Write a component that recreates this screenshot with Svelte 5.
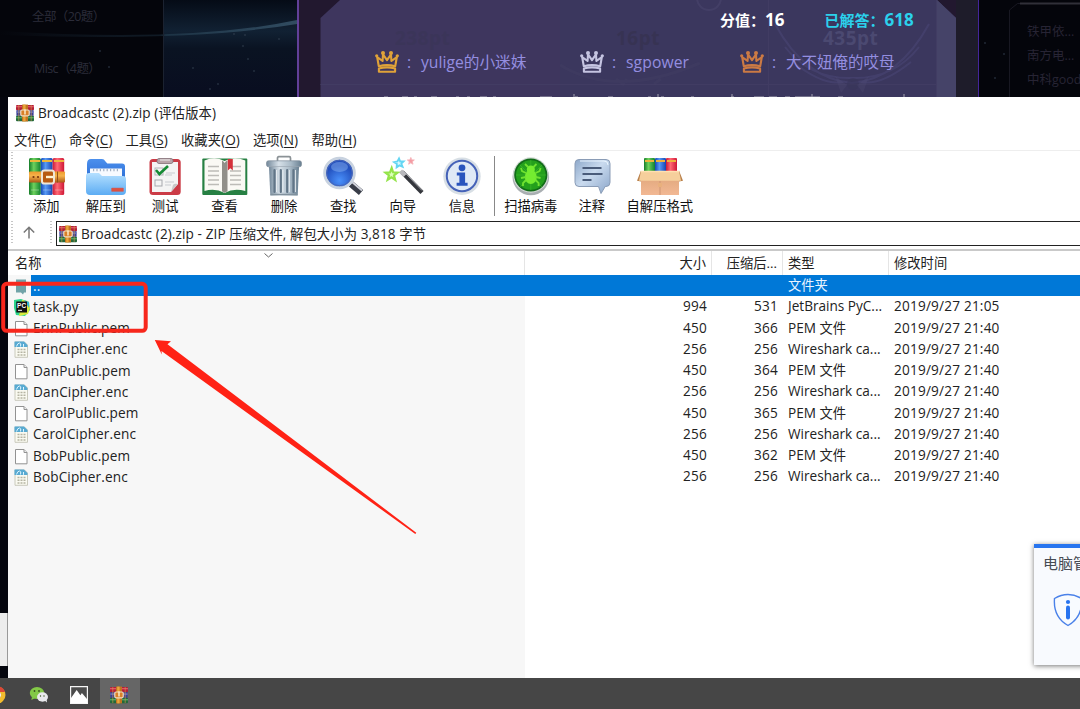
<script>
  const menus = [
    ['文件', 'F', 55], ['命令', 'C', 56.5], ['工具', 'S', 55.5],
    ['收藏夹', 'O', 72], ['选项', 'N', 58.5], ['帮助', 'H', 60]
  ];
  const tools = [
    ['books', '添加', 59.4], ['folder', '解压到', 59.4], ['test', '测试', 59.4],
    ['view', '查看', 59.4], ['trash', '删除', 59.4], ['find', '查找', 59.4],
    ['wand', '向导', 59.4], ['info', '信息', 59.4], ['sep', '', 7],
    ['virus', '扫描病毒', 62], ['note', '注释', 60], ['sfx', '自解压格式', 76]
  ];
  const pem = (name, packed) => ({ icon: 'doc', name, size: '450', packed, type: 'PEM ', zh: '文件', date: '2019/9/27 21:40' });
  const enc = (name) => ({ icon: 'enc', name, size: '256', packed: '256', type: 'Wireshark ca...', zh: '', date: '2019/9/27 21:40' });
  const files = [
    { icon: 'up', name: '..', size: '', packed: '', type: '', zh: '文件夹', date: '', sel: true },
    { icon: 'py', name: 'task.py', size: '994', packed: '531', type: 'JetBrains PyC...', zh: '', date: '2019/9/27 21:05' },
    pem('ErinPublic.pem', '366'), enc('ErinCipher.enc'),
    pem('DanPublic.pem', '364'), enc('DanCipher.enc'),
    pem('CarolPublic.pem', '365'), enc('CarolCipher.enc'),
    pem('BobPublic.pem', '362'), enc('BobCipher.enc')
  ];
  const stars = [[234, 34], [245, 35], [243, 46], [279, 39], [248, 59], [254, 71], [193, 68], [218, 84], [210, 89], [109, 67], [985, 43], [1004, 54], [995, 78], [100, 51]];
</script>

{#snippet rar(size)}
  <svg class="rar" width={size} height={size} viewBox="0 0 18 18">
    <rect x="0" y="1" width="18" height="5.2" rx="1" fill="#b32038" />
    <rect x="0" y="2" width="18" height="1.3" fill="#dd5566" />
    <rect x="0.4" y="6.2" width="17.2" height="5.6" fill="#3c3f94" />
    <rect x="0.4" y="7.4" width="17.2" height="1.4" fill="#7078c4" />
    <rect x="0" y="11.8" width="18" height="5.4" rx="1" fill="#23683a" />
    <rect x="0" y="13" width="18" height="1.4" fill="#51a362" />
    <path d="M2.8 1v16M15.2 1v16" stroke="#d6a04a" stroke-width=".8" opacity=".75" />
    <rect x="6" y="0.6" width="6" height="16.8" fill="#c27320" />
    <rect x="7.2" y="0.6" width="2.4" height="16.8" fill="#eaa63b" />
    <rect x="4.8" y="6" width="8.4" height="5.8" rx="1.2" fill="#d98028" stroke="#f0dcc0" stroke-width="1.2" />
    <path d="M9 5.600v4.800" stroke="#fff1d0" stroke-width="1.4" />
  </svg>
{/snippet}

{#snippet crown(color)}
  <svg class="crown" width="24" height="22" viewBox="0 0 24 22" fill="none" stroke={color} stroke-width="2.1" stroke-linejoin="round">
    <path d="M3.8 15.2 2.2 6.2 7.6 10 8 3.3 12 9.2 16 3.3 16.4 10 21.8 6.2 20.2 15.2Q12 13 3.8 15.2Z" />
    <path d="M3.9 17.4Q12 15.4 20.1 17.4V20.7H3.9Z" />
    <g fill={color} stroke="none"><circle cx="1.7" cy="4.8" r="1.6" /><circle cx="8" cy="2.1" r="2" /><circle cx="16" cy="2.1" r="2" /><circle cx="22.3" cy="4.8" r="1.6" /></g>
  </svg>
{/snippet}

{#snippet toolIcon(kind)}
  <svg class="tool-icon" width="40" height="40" viewBox="0 0 40 40">
    {#if kind === 'books'}
      <rect x="3" y="2" width="11.8" height="37" rx="1.5" fill="url(#green)" />
      <rect x="14.8" y="2" width="11.8" height="37" rx="1.5" fill="url(#blue)" />
      <rect x="26.6" y="2" width="11.6" height="37" rx="1.5" fill="url(#red)" />
      <path d="M4 5h10M16 5h10M28 5h10" stroke="#edb73a" stroke-width="2.2" />
      <path d="M5 34h8M17 34h8M29 34h8" stroke="#fff" stroke-width=".8" opacity=".4" />
      <rect x="3" y="15.5" width="36" height="11" rx="1" fill="url(#belt)" />
      <circle cx="7.500" cy="21" r="1.1" fill="#78350d" /><circle cx="12" cy="21" r="1.1" fill="#78350d" />
      <rect x="16" y="14.600" width="12" height="13" rx="2.4" fill="#b85c12" stroke="#eee6d6" stroke-width="2" />
      <path d="M20 21h7" stroke="#fff3d0" stroke-width="2.4" /><path d="M31.5 15.5v11" stroke="#91501a" />
    {:else if kind === 'folder'}
      <path d="M1 8q0-5 4-5h11q2 0 3.5 2.4l1.8 2H36q3 0 3 3V26H1Z" fill="url(#folderBack)" />
      <rect x="4" y="12.5" width="32" height="14" fill="#f7faff" />
      <path d="M7 14h26" stroke="#a3b1c4" stroke-width="2.4" stroke-dasharray="1.2 2.2" />
      <path d="M0 20q0-3 3-3h10l3 3h21q3 0 3 3v12q0 4-4 4H4q-4 0-4-4Z" fill="url(#folderFront)" />
      <rect x="25.5" y="32" width="12" height="3.500" rx=".6" fill="#dd5142" stroke="#b76a77" stroke-width=".5" />
    {:else if kind === 'test'}
      <rect x="4.5" y="3" width="31.2" height="36" rx="3.5" fill="#cb3b46" />
      <path d="M7 6h26v22l-7 8H7Z" fill="#f4f4f4" /><path d="M33 28q-4-1-5 1l-2 7Z" fill="#c9c9c9" />
      <rect x="12" y="2.500" width="16" height="5" rx="2" fill="#b9a5aa" stroke="#826f76" stroke-width=".8" />
      <path d="M15 4h10" stroke="#eee" />
      <rect x="10" y="12" width="8" height="7" fill="none" stroke="#b2b4b8" /><rect x="10" y="24" width="7" height="6" fill="none" stroke="#a6a8ad" />
      <path d="m11 14 3.4 4L23 10" fill="none" stroke="#168b35" stroke-width="2.6" />
      <path d="M21 17h9M20 19h7M20 26h9M20 29h6" stroke="#c8cbd0" />
    {:else if kind === 'view'}
      <rect x="-2.7" y="2.5" width="45" height="36.5" rx="1" fill="#278043" />
      <path d="M-.5 4.5Q10-.2 19.6 5 29-.2 40.3 4.5V35Q29 31.5 19.6 37 10 31.5-.5 35Z" fill="#faf9f4" />
      <path d="M17 4.5q2 1 2.7 2.5Q20.5 5 22.5 4.5v31q-2 0-2.8 1.5-1-1.5-2.7-1.5Z" fill="#918f89" />
      <path d="M3 10.5h11M3 15h11M3 19.5h11M3 24h11M3 28.5h11M25 10.5h11M25 15h11M25 19.5h11M25 24h11M25 28.5h11" stroke="#bdbcb7" stroke-width="1.3" />
      <path d="M22.8 3h5v11.500l-2.5-2.3-2.5 2.3Z" fill="#d4313a" />
    {:else if kind === 'trash'}
      <path d="M13.5 5V2q0-1.3 1.3-1.3h10.4q1.3 0 1.3 1.3v3" fill="none" stroke="#8b9296" stroke-width="1.700" />
      <rect x="2.5" y="4.8" width="35" height="6" rx="2" fill="url(#metal)" stroke="#7e8d9a" stroke-width=".7" />
      <path d="M5 11h30l-1.3 28.5H6.3Z" fill="url(#metal)" />
      <path d="M10.5 14v22M16.8 14v22M23.2 14v22M29.5 14v22" stroke="#617587" stroke-width="2.2" stroke-linecap="round" />
      <path d="M12.6 14v22M18.9 14v22M25.3 14v22M31.4 14v22" stroke="#edf2f5" stroke-width=".9" />
      <path d="M6.5 38.5h27" stroke="#81919d" stroke-width="1.5" />
    {:else if kind === 'find'}
      <path d="m28 28 10 8.500" stroke="#393d48" stroke-width="6.5" /><path d="m29 26 10 8.500" stroke="#d2d4dc" stroke-width="1.8" />
      <circle cx="16.5" cy="17" r="14.8" fill="url(#lens)" stroke="#c8d2df" stroke-width="3" /><circle cx="16.5" cy="17" r="12.7" fill="none" stroke="#4966b6" />
      <ellipse cx="16.5" cy="11" rx="8.5" ry="5" fill="#acd2ff" opacity=".35" />
    {:else if kind === 'wand'}
      <path d="m19 16 20 20.500" stroke="#34363c" stroke-width="4.400" /><path d="m20 14.800 19 19.700" stroke="#9b9da2" /><path d="m17.5 15 4.500 4.500" stroke="#b9b9bd" stroke-width="4.400" />
      <path d="m16 2.400 1.200 3.100 3.400-.1-2.300 2.300 1.300 3.100-3.200-1.400-2.800 2 .3-3.400-2.800-1.800 3.300-.8Z" fill="#d7f8ff" stroke="#64d6f3" stroke-width="1.8" />
      <path d="m27.800 1.500.9 2.400 2.600.1-2 1.700.7 2.500-2.200-1.400-2.100 1.400.7-2.500-2-1.700 2.500-.1Z" fill="#f49aa2" stroke="#f6b4b9" />
      <path d="m8.700 12 1.400 4.300 4.500.4-3.600 2.800 1.200 4.300-3.700-2.500-3.800 2.400 1.300-4.300-3.500-2.800 4.500-.2Z" fill="#dcffba" stroke="#94e44a" stroke-width="2.200" />
    {:else if kind === 'info'}
      <circle cx="20" cy="20.3" r="18.7" fill="#d8dfe5" /><circle cx="20" cy="20" r="15.2" fill="#dfe9f6" stroke="#4562b8" stroke-width="2" />
      <circle cx="20" cy="11.8" r="3.4" fill="#2954bd" /><path d="M14.800 16.5h8.300v10.3h2.5v2.900H14.600v-2.900h2.800v-7.200h-2.600Z" fill="#2954bd" />
    {:else if kind === 'virus'}
      <circle cx="19.8" cy="21" r="18.3" fill="#a9afb2" /><circle cx="19.8" cy="19" r="17.7" fill="#d2dad4" /><circle cx="19.8" cy="19" r="16.6" fill="#126b19" /><circle cx="19.8" cy="19" r="14.8" fill="#24a01c" />
      <path d="M19.8 4v30M5 19h30M9 9l22 22M31 9 9 31" stroke="#41b930" stroke-width=".6" />
      <ellipse cx="19.8" cy="21" rx="6" ry="7" fill="#74ec30" /><circle cx="19.8" cy="13.400" r="4" fill="#74ec30" />
      <path d="m15 17-4-2-1-3m5 9-5 1m5 2-3 3v3m12.6-13 4-2 1-3m-5 9 5 1m-5 2 3 3v3M17 11l-3-3m8.500 3 3-3" fill="none" stroke="#70e230" stroke-width="1.8" />
    {:else if kind === 'note'}
      <path d="M7 3.500h27q4 0 4 4v19q0 4-4 4l-.8 0-4.200 7-2.500-7H7q-4 0-4-4V7.500q0-4 4-4Z" fill="url(#note)" stroke="#8a9cb6" />
      <path d="M8 5h24q4 0 4 4" fill="none" stroke="#eaf5ff" /><path d="M10.500 12h19M10.500 18h20M10.500 24h9" stroke="#4a5c7a" stroke-width="2" />
    {:else if kind === 'sfx'}
      <rect x="4" y="2" width="11" height="18" rx="1" fill="url(#green)" /><rect x="15" y="2" width="11" height="18" rx="1" fill="url(#blue)" /><rect x="26" y="2" width="11" height="18" rx="1" fill="url(#red)" />
      <path d="M5 5h9M16 5h9M27 5h9" stroke="#edb33b" stroke-width="2" />
      <path d="M1 16h38v23H1Z" fill="url(#box)" /><path d="m1 14.500-4 10.300 4 .8Zm38 0 4 10.300-4 .8Z" fill="#b9814c" />
      <path d="M1 15h38l2 9.800H-1Z" fill="#f6cf9c" /><path d="M1 15.500h38" stroke="#ffe0b0" stroke-width="1.400" /><path d="M20 25v14" stroke="#cf9572" /><path d="M18 27h4v4h-4Z" fill="#e9b07d" />
    {/if}
  </svg>
{/snippet}

{#snippet fileIcon(kind)}
  <svg class="file-icon" width="18" height="20" viewBox="0 0 18 20">
    {#if kind === 'up'}
      <path d="M3 3.500h10v13h-2l-1 2-2-2H3Z" fill="#71a3a8" /><path d="M3 8h10" stroke="#6293a0" />
    {:else if kind === 'py'}
      <path d="m1 3 7-1 8 3 1 8-5 6-9-1-2-7Z" fill="#29d68b" /><path d="m9 3 6 1 2 7-2 6-9 2Z" fill="#d9eb3d" /><path d="m11 3 5 2v6Z" fill="#31b5d5" />
      <rect x="3.300" y="4.500" width="10.700" height="11" fill="#111" /><text x="4.100" y="10.800" class="pc">PC</text><path d="M5 13.300h4" stroke="#fff" />
    {:else if kind === 'doc'}
      <path d="M2.500 3.500h8.500l3 3v11.300H2.500Z" fill="#fff" stroke="#929292" /><path d="M11 3.500v3h3" fill="#eee" stroke="#929292" />
    {:else}
      <path d="M2 3h9.500l3 3v12.300H2Z" fill="#fafaf1" stroke="#c4c4b5" stroke-width=".9" /><path d="M1.500 2.500h9.500l3.500 3.500v2H1.500Z" fill="#58aad2" /><path d="M3.500 7.500q1-3.500 3-3.500t1 3.500m3 .3V5" fill="none" stroke="#dff5ff" />
      <path d="M4.500 10.500h8M4.500 13.200h8M4.500 16h8" stroke="#b5b4a3" stroke-width="1.600" stroke-dasharray="2 1" />
    {/if}
  </svg>
{/snippet}

<svg width="0" height="0" class="defs">
  <defs>
    <linearGradient id="green"><stop stop-color="#157c29" /><stop offset=".4" stop-color="#6ed25d" /><stop offset="1" stop-color="#128030" /></linearGradient>
    <linearGradient id="blue"><stop stop-color="#1548b5" /><stop offset=".4" stop-color="#579af4" /><stop offset="1" stop-color="#1644b0" /></linearGradient>
    <linearGradient id="red"><stop stop-color="#c81a38" /><stop offset=".4" stop-color="#ff6874" /><stop offset="1" stop-color="#ce1735" /></linearGradient>
    <linearGradient id="belt" x2="0" y2="1"><stop stop-color="#ed9b2d" /><stop offset=".4" stop-color="#f6b34c" /><stop offset="1" stop-color="#aa5715" /></linearGradient>
    <linearGradient id="folderBack" x2="0" y2="1"><stop stop-color="#4c90ed" /><stop offset="1" stop-color="#2869d2" /></linearGradient>
    <linearGradient id="folderFront" x2="0" y2="1"><stop stop-color="#b5e0ff" /><stop offset="1" stop-color="#5cacf3" /></linearGradient>
    <linearGradient id="metal"><stop stop-color="#73889a" /><stop offset=".35" stop-color="#d6e0e8" /><stop offset=".7" stop-color="#a9bac7" /><stop offset="1" stop-color="#687f91" /></linearGradient>
    <radialGradient id="lens" cy=".75"><stop stop-color="#4a91fb" /><stop offset="1" stop-color="#2351bf" /></radialGradient>
    <linearGradient id="note" x2="1" y2="1"><stop stop-color="#8da8ca" /><stop offset=".45" stop-color="#c9daee" /><stop offset="1" stop-color="#8ba6ca" /></linearGradient>
    <linearGradient id="box" x2="0" y2="1"><stop stop-color="#dda477" /><stop offset="1" stop-color="#f2b894" /></linearGradient>
  </defs>
</svg>

<div class="desktop">
  <div class="scene">
    <svg class="sky" width="1080" height="97" viewBox="0 0 1080 97">
      <defs>
        <linearGradient id="space" x2="0" y2="1"><stop stop-color="#050b16" /><stop offset=".32" stop-color="#112133" /><stop offset=".5" stop-color="#0a1322" /><stop offset="1" stop-color="#090d20" /></linearGradient>
        <linearGradient id="beam"><stop stop-color="#182634" stop-opacity="0" /><stop offset=".54" stop-color="#13202c" /><stop offset=".56" stop-color="#20384a" /><stop offset="1" stop-color="#3a586e" /></linearGradient>
      </defs>
      <rect width="1080" height="97" fill="#04050b" />
      <rect x="163" width="134" height="97" fill="url(#space)" />
      <path d="M0 31Q190 43 297 20v4Q190 42 0 35Z" fill="url(#beam)" opacity=".8" />
      <path d="M163.500 0v97" stroke="#1b2230" />
      <rect x="297" width="682" height="97" fill="#22182f" /><rect x="956" width="22" height="97" fill="#1e1c2a" />
      <path d="M298 0v97" stroke="#624099" stroke-width="2" /><path d="M978.500 0v97" stroke="#44259a" />
      <path d="M320.500 18 340 0H937L956 18V97H320.500Z" fill="#3e365e" />
      <path d="M560 0H937L956 18V97H560Z" fill="#3b385f" opacity=".6" />
      <path d="M937 0 956 18V97H937Z" fill="#454368" /><path d="M768.500 0v97M936.500 0v97M320 84.500H937" stroke="#474269" opacity=".5" />
      <path d="M775 24q30 55 77 59 47-4 77-59M785 47q25 32 67 31 42 1 67-31M793 62q30 24 50 20m68-20q-30 24-50 20" fill="none" stroke="#4a4777" stroke-width="2" opacity=".55" />
      <circle cx="853" cy="84" r="6" fill="#38355a" opacity=".6" /><path d="m835 76 12 9-6 8m28-17-12 9 6 8" fill="#555078" opacity=".25" />
      <circle cx="709" cy="-2" r="12" fill="none" stroke="#4a456c" stroke-width="2" opacity=".6" />
      <path d="M560 65q56 34 140-2m-84 16 7 5 4-5m27 5 7-5" fill="none" stroke="#464167" stroke-width="3" opacity=".3" />
      <path d="M1009.500 97V10l8-6.500H1080" fill="none" stroke="#181822" /><path d="M1020 3.500h60" stroke="#303039" stroke-width="2" />
      {#each stars as [x, y]}<circle cx={x} cy={y} r=".8" fill="#364353" />{/each}
      <path d="M384 96.500h4m14 0h6m6 0h3m14 0h6m19 0h3m8 0h3m10 0h7m6 0h3m44 0h12m23 0h3m30 0h5m35 0h3m10 0h3m27 0h3m37 0h3m20 0h10m5 0h8m8 0h5m5 0h25m18 0h5" stroke="#9b98a9" opacity=".6" />
      <path d="M574 94v3m84-3v3m74-3v3m80-3v3m92-3v3" stroke="#9b98a9" stroke-width="2" opacity=".55" />
    </svg>
    <div class="categories"><span>全部（20题）</span><span>Misc（4题）</span></div>
    <div class="card">
      <div class="ghost"><span>238pt</span><span>16pt</span><span>435pt</span></div>
      <div class="stats"><b>分值：<i>16</i></b><b class="solved">已解答：<i>618</i></b></div>
      <div class="winners">
        <div class="winner first">{@render crown('#dfa239')}<span class="colon">:</span><span>yulige的小迷妹</span></div>
        <div class="winner second">{@render crown('#c5c4e1')}<span class="colon">:</span><span>sgpower</span></div>
        <div class="winner third">{@render crown('#cb7a44')}<span class="colon">:</span><span>大不妞俺的哎母</span></div>
      </div>
    </div>
    <div class="ranking"><span>铁甲依...</span><span>南方电...</span><span>中科good</span></div>
  </div>
  <div class="edge"></div>

  <section class="window">
    <header class="title">{@render rar(18)}<span class="title-text">Broadcastc (2).zip (<em>评估版本</em>)</span></header>
    <nav class="menu">{#each menus as [zh, key, w]}<span style:width="{w}px"><em>{zh}</em>(<u>{key}</u>)</span>{/each}</nav>
    <div class="toolbar">
      {#each tools as [kind, label, w]}
        {#if kind === 'sep'}<i class="divider"></i>{:else}
          <div class="tool" style:width="{w}px">{@render toolIcon(kind)}<span>{label}</span></div>
        {/if}
      {/each}
    </div>
    <div class="address">
      <div class="go-up"><svg width="14" height="14" viewBox="0 0 14 14"><path d="M7 12.500V1.500M1.800 6.500 7 1.300l5.200 5.200" fill="none" stroke="#777" stroke-width="1.500" /></svg></div>
      <div class="path">{@render rar(18)}<span class="path-text">Broadcastc (2).zip - ZIP <em>压缩文件</em>, <em>解包大小为</em> 3,818 <em>字节</em></span></div>
    </div>
    <div class="row head">
      <span class="name">名称<svg width="9" height="5" viewBox="0 0 9 5"><path d="m.5.5 4 3.500 4-3.500" fill="none" stroke="#666" /></svg></span>
      <span class="num">大小</span><span class="num packed">压缩后...</span><span class="type">类型</span><span class="date">修改时间</span>
    </div>
    <div class="list">
      {#each files as f}
        <div class="row" class:sel={f.sel}>
          <span class="name">{@render fileIcon(f.icon)}<span class="label">{f.name}</span></span>
          <span class="num">{f.size}</span><span class="num packed">{f.packed}</span>
          <span class="type">{f.type}<em>{f.zh}</em></span><span class="date">{f.date}</span>
        </div>
      {/each}
    </div>
  </section>

  <aside class="popup">
    <strong>电脑管</strong>
    <svg width="30" height="34" viewBox="0 0 30 34"><path d="M15 1.500Q8 1.500 1.500 5.500 0 24 15 32.500 30 24 28.500 5.500 22 1.500 15 1.500Z" fill="#f8fbff" stroke="#4a81e9" stroke-width="1.400" /><circle cx="15" cy="9" r="2.100" fill="#2874ef" /><path d="M15 14.500v10" stroke="#2874ef" stroke-width="4" stroke-linecap="round" /></svg>
  </aside>

  <footer class="taskbar">
    <div class="task chrome"><svg width="20" height="20" viewBox="0 0 20 20"><circle cx="10" cy="10" r="8.500" fill="#f2bb2e" /><path d="M2 7a8.500 8.500 0 0 1 16 0Z" fill="#db4737" /><path d="m2 7 7 11A8.500 8.500 0 0 1 2 7" fill="#3ba552" /><circle cx="10" cy="10" r="3.500" fill="#4a8af4" stroke="#fff" /></svg></div>
    <div class="task"><svg width="20" height="18" viewBox="0 0 20 18"><ellipse cx="8" cy="7" rx="7.200" ry="6" fill="#83c947" /><path d="m3 11-.7 3 4-2Z" fill="#83c947" /><ellipse cx="13.500" cy="11" rx="5.500" ry="4.700" fill="#e9e9ed" /><path d="m15 14 3 2.500-.5-4Z" fill="#e9e9ed" /><g fill="#385020"><circle cx="5.500" cy="5" r=".9" /><circle cx="10" cy="5" r=".9" /><circle cx="11.500" cy="10" r=".7" /><circle cx="15" cy="10" r=".7" /></g></svg></div>
    <div class="task"><svg width="18" height="18" viewBox="0 0 18 18"><path d="M.6.600h16.800v16.800H.6Z" fill="#4c4c4c" stroke="#f5f5f5" stroke-width="1.200" /><path d="M1 16v-4l5.700-8 3.700 5.300 1.500-2.300L17 13v4H1Z" fill="#fff" /></svg></div>
    <div class="task active">{@render rar(18)}</div>
  </footer>

  <svg class="marks" width="1080" height="709" viewBox="0 0 1080 709">
    <rect x="3.200" y="283.800" width="142.500" height="47" rx="3.500" fill="none" stroke="#f7271c" stroke-width="4" />
    <path d="M154.800 340 171 341.300 167.500 344.200 416.300 532.800 415.300 534 161.500 351 161.800 354.500Z" fill="#ff2215" />
  </svg>
</div>

<style>
  :global(body) { margin: 0; overflow: hidden; }
  .desktop { position: relative; width: 1080px; height: 709px; overflow: hidden; background: #05060e; color: #222; font: 13.600px "Open Sans", "Noto Sans", "Noto Sans CJK SC", sans-serif; }
  svg { display: block; flex: none; overflow: visible; }
  em, i { font-style: normal; }
  .defs { position: absolute; }
  .scene { position: relative; display: flex; height: 97px; overflow: hidden; }
  .sky { position: absolute; inset: 0; }
  .categories { position: relative; width: 320px; flex: none; display: flex; flex-direction: column; gap: 34px; padding: 8px 0 0 32px; box-sizing: border-box; color: #2b2c39; font-size: 12.500px; line-height: 18px; letter-spacing: -0.600px; }
  .categories span + span { padding-left: 2px; }
  .card { position: relative; width: 636px; flex: none; }
  .stats { display: flex; padding: 9px 0 0 400px; gap: 40px; font-size: 15px; line-height: 22px; color: #fff; white-space: nowrap; }
  .stats b { font-weight: 700; }
  .stats i { font-size: 17px; }
  .solved { color: #2bd1ec; }
  .winners { display: grid; grid-template-columns: 205px 160px 1fr; padding: 18px 0 0 55px; font-size: 15.700px; line-height: 26px; color: #948ee0; white-space: nowrap; }
  .winner { display: flex; align-items: center; }
  .second { letter-spacing: 0.100px; }
  .third { font-size: 15.500px; }
  .colon { width: 14px; margin-left: 8px; }
  .ghost { position: absolute; inset: 26px 0 auto 75px; display: grid; grid-template-columns: 221px 207px 1fr; color: #373353; font-size: 19px; line-height: 24px; font-weight: 700; letter-spacing: 0.500px; }
  .ghost span:first-child { color: #3b3559; }
  .ghost span:last-child { color: #4b4971; }
  .ranking { position: relative; padding: 20px 0 0 71px; display: flex; flex-direction: column; line-height: 24px; color: #272434; font-size: 12.500px; white-space: nowrap; }
  .edge { position: absolute; left: 0; top: 613px; width: 8px; height: 53px; background: #ededed; box-shadow: inset -1px 0 #999; }
  .window { position: absolute; left: 8px; top: 97px; width: 1072px; height: 581px; display: flex; flex-direction: column; background: #fff; }
  .title { display: flex; align-items: center; height: 31px; gap: 4px; padding-left: 8px; letter-spacing: 0.080px; }
  .menu { height: 23px; box-sizing: border-box; display: flex; align-items: center; padding: 1px 0 0 6px; border-bottom: 1px solid #eee; white-space: nowrap; letter-spacing: 0.060px; }
  em { font-size: 13.300px; }
  .menu u { text-underline-offset: 2px; }
  .toolbar { height: 67px; box-sizing: border-box; display: flex; padding: 5px 0 0 8.700px; background: repeating-linear-gradient(#c6c6c6 0 1px, transparent 1px 3px) 3px 1px / 2px 63px no-repeat; }
  .tool { display: flex; flex-direction: column; align-items: center; flex: none; font-size: 13.300px; line-height: 20px; color: #111; white-space: nowrap; }
  .divider { width: 1px; height: 60px; margin: 0 5px 0 2px; background: #888; }
  .address { display: flex; height: 33px; box-sizing: border-box; padding: 3px 0; border-bottom: 2px solid #c9c9c9; }
  .go-up { width: 48px; box-sizing: border-box; padding: 5px 0 0 14px; background: repeating-linear-gradient(#c6c6c6 0 1px, transparent 1px 3px) 3px 0 / 2px 24px no-repeat, repeating-linear-gradient(#c6c6c6 0 1px, transparent 1px 3px) 42px 0 / 2px 24px no-repeat; }
  .path { flex: 1; display: flex; align-items: center; gap: 4px; padding-left: 2px; border: 1px solid #222; border-right: 0; white-space: nowrap; letter-spacing: 0.090px; }
  .row { display: grid; grid-template-columns: 517px 187px 71px 106px 1fr; height: 21.250px; line-height: 21.250px; white-space: nowrap; }
  .head { height: 24px; line-height: 25px; box-sizing: border-box; }
  .head span { border-right: 1px solid #e5e5e5; font-size: 13.300px; }
  .head .date { border: 0; }
  .head .name { padding-left: 7px; gap: 222px; align-items: flex-start; }
  .head .name svg { margin-top: 2px; }
  .name { display: flex; align-items: center; padding-left: 5px; }
  .label { padding-left: 2px; flex: 1; letter-spacing: 0.130px; }
  .list .label, .list .num, .list .type, .list .date { margin-top: -1px; }
  .list .num { letter-spacing: 0.200px; }
  .list .date { letter-spacing: 0.200px; }
  .num { text-align: right; padding-right: 5px; }
  .packed { padding-right: 5px; }
  .type, .date { padding-left: 5px; }
  .list { flex: 1; background: linear-gradient(90deg, #f7f7f7 517px, #fff 517px); }
  .sel { color: #e9f4ff; background: linear-gradient(90deg, transparent 23px, #0078d7 23px); }
  .pc { font: bold 6.500px "Liberation Sans", sans-serif; fill: #fff; }
  .popup { position: absolute; left: 1034px; top: 544px; width: 60px; height: 121px; box-sizing: border-box; border-top: 4px solid #2875ef; background: #f8fafe; box-shadow: 0 1px 5px #777; padding: 5px 0 0 9px; white-space: nowrap; color: #474b53; }
  .popup strong { display: block; font-size: 15px; line-height: 20px; font-weight: 400; }
  .popup svg { margin: 20px 0 0 10px; }
  .taskbar { position: absolute; inset: 678px 0 0; display: flex; background: #464646; }
  .task { width: 40px; padding: 2px 2px 0 0; box-sizing: border-box; display: flex; align-items: center; justify-content: center; }
  .chrome { width: 20px; justify-content: flex-end; padding-right: 13px; }
  .active { background: #666; }
  .marks { position: absolute; inset: 0; pointer-events: none; }
</style>
